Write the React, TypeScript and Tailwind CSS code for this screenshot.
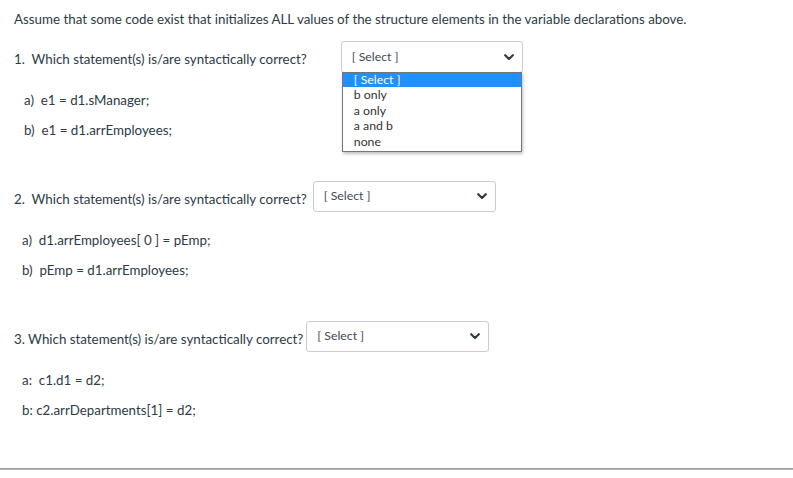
import React from "react";

function Chevron() {
  return (
    <svg width="10" height="7" viewBox="0 0 10 7" className="shrink-0">
      <polyline points="1.2,1.2 5,5 8.8,1.2" fill="none" stroke="#2d3b45" strokeWidth="2.2" strokeLinecap="round" strokeLinejoin="round" />
    </svg>
  );
}

function Select({ w, h, children }: { w: string; h: string; children?: React.ReactNode }) {
  return (
    <div className={`relative ${w} ${h} shrink-0`}>
      <div className="w-full h-full flex items-center justify-between pl-[10px] pr-[8px] border border-[#c7cdd1] rounded-[3px] bg-white">
        <span className="text-[12.3px] leading-none text-[#3d4a54]">[ Select ]</span>
        <Chevron />
      </div>
      {children}
    </div>
  );
}

export default function App() {
  const line = "text-[13.35px] leading-[18px] text-[#2d3b45]";
  return (
    <div className="w-[793px] h-[478px] bg-white overflow-hidden" style={{ fontFamily: "Lato, 'Noto Sans', sans-serif" }}>
      <div className="pt-[10px] px-[14px]">
        <p className={line}>Assume that some code exist that initializes ALL values of the structure elements in the variable declarations above.</p>

        <div className="mt-[13px] flex items-center">
          <span className={`${line} mt-[4px] whitespace-pre`}>1.  Which statement(s) is/are syntactically correct?</span>
          <div className="ml-[34px]">
            <Select w="w-[182px]" h="h-[32px]">
              <div className="absolute left-[1px] top-[31px] w-[180px] bg-white border border-[#767676] shadow-[1px_2px_3px_rgba(0,0,0,0.25)] text-[12.3px] leading-[15.5px] text-[#333]">
                <div className="bg-[#1e90ff] text-white pl-[11px] h-[14px] leading-[14px]">[ Select ]</div>
                <div className="pl-[11px]">b only</div>
                <div className="pl-[11px]">a only</div>
                <div className="pl-[11px]">a and b</div>
                <div className="pl-[11px] pb-[2px]">none</div>
              </div>
            </Select>
          </div>
        </div>

        <div className="pl-[10px]">
          <p className={`${line} mt-[18px] whitespace-pre`}>a)  e1 = d1.sManager;</p>
          <p className={`${line} mt-[12px] whitespace-pre`}>b)  e1 = d1.arrEmployees;</p>
        </div>

        <div className="mt-[42px] flex items-center">
          <span className={`${line} mt-[5px] whitespace-pre`}>2.  Which statement(s) is/are syntactically correct?</span>
          <div className="ml-[6px]">
            <Select w="w-[183px]" h="h-[31px]" />
          </div>
        </div>

        <div className="pl-[8px]">
          <p className={`${line} mt-[19px] whitespace-pre`}>a)  d1.arrEmployees[ 0 ] = pEmp;</p>
          <p className={`${line} mt-[12px] whitespace-pre`}>b)  pEmp = d1.arrEmployees;</p>
        </div>

        <div className="mt-[42px] flex items-center">
          <span className={`${line} mt-[5px] whitespace-pre`}>3. Which statement(s) is/are syntactically correct?</span>
          <div className="ml-[3px]">
            <Select w="w-[183px]" h="h-[31px]" />
          </div>
        </div>

        <div className="pl-[8px]">
          <p className={`${line} mt-[19px] whitespace-pre`}>a:  c1.d1 = d2;</p>
          <p className={`${line} mt-[12px] whitespace-pre`}>b: c2.arrDepartments[1] = d2;</p>
        </div>
      </div>
      <div className="mt-[49px] h-[2px] bg-[#b4b4b4] border-t border-[#a0a0a0]" />
    </div>
  );
}
